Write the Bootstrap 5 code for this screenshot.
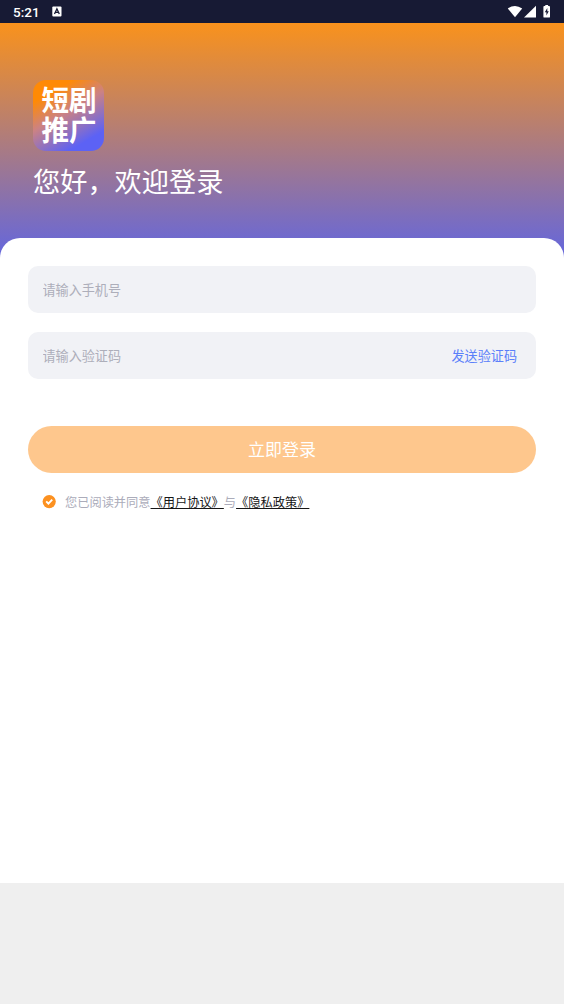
<!DOCTYPE html>
<html lang="zh-CN">
<head>
<meta charset="utf-8">
<meta name="viewport" content="width=device-width, initial-scale=1">
<title>登录</title>
<link href="https://cdn.jsdelivr.net/npm/bootstrap@5.3.0/dist/css/bootstrap.min.css" rel="stylesheet">
<style>
body{font-family:"Noto Sans CJK SC",sans-serif;background:#efefef;height:100vh;overflow:hidden}
.statusbar{height:23px;background:#171a34;color:#fff;font:500 13.5px/23px Roboto,sans-serif;padding:1px 13px 0}
.statusbar svg{margin-top:-1px}
.notice{margin-left:12px}
.screen{height:860px;background:#fff}
.hero{height:240px;background:linear-gradient(#f9921c,#6065e2);padding:57px 33px 0}
.logo{width:71px;height:71px;border-radius:13px;background:linear-gradient(150deg,#ff8a05 20%,#cb8284 46%,#5c62f5 82%);color:#fff;font-size:27.5px;font-weight:700;padding:0 0 0 8.5px}
.logo-line{line-height:29.5px;transform:scaleY(1.05);transform-origin:top}
.logo svg{position:absolute;left:25px;top:16px}
.greeting{font-size:27.2px;line-height:40px;margin-top:9px;font-weight:400}
.sheet{margin-top:-25px;border-radius:20px 20px 0 0;padding:28px 28px 0}
.field{height:47px;border-radius:10px;background:#f1f2f6;padding:0 19px 0 14.5px;margin-bottom:19px}
.field .form-control{font-size:13.1px;line-height:20px}
.field .form-control::placeholder{color:#adaeba;opacity:1}
.send{font-size:13.1px;line-height:20px;color:#5b80fa}
.login{height:47px;margin-top:28px;background:#fec78d;color:#fff;font-size:17px;padding:0 0 2px;--bs-btn-hover-bg:#fec78d}
.terms{font-size:12.22px;line-height:18px;margin:20px 0 0 14px;color:#abacba}
.terms a{color:#161616}
.terms span{margin-left:9px}
</style>
</head>
<body>
<div class="statusbar d-flex align-items-center">
  <span>5:21</span>
  <svg class="notice" width="10" height="11" viewBox="0 0 10 11"><rect x=".3" y=".5" width="9.2" height="10" rx="1" fill="#fff"/><path d="M2.500 8 4.900 2.800 7.300 8M3.400 6.400h3" fill="none" stroke="#171a34" stroke-width="1.300"/></svg>
  <svg class="ms-auto" width="44" height="14" viewBox="0 0 44 14" fill="#fff"><path d="M.8 3.500Q8 -1.700 15.200 3.500L8 12.300Z"/><path d="M29 .8V12.600H17Z"/><path d="M37.300 1h1V0h2.800v1h1q.9 0 .9.900v9.800q0 .9-.9.900h-4.800q-.9 0-.9-.9V1.900q0-.9.900-.9z"/><path d="M40.300 3.100 37.800 7.300h1.600v3.300l2.400-4.300h-1.500z" fill="#171a34"/></svg>
</div>
<main class="screen">
  <header class="hero text-white">
    <div class="logo position-relative pt-1">
      <div class="logo-line">短剧</div>
      <div class="logo-line">推广</div>
      <svg width="6" height="6" viewBox="0 0 6 6"><path d="M1 .5 5.500 3 1 5.500z" fill="#fff"/></svg>
    </div>
    <h1 class="greeting mb-0">您好，欢迎登录</h1>
  </header>
  <form class="sheet bg-white position-relative">
    <div class="field d-flex align-items-center">
      <input class="form-control border-0 bg-transparent p-0 shadow-none" type="tel" placeholder="请输入手机号">
    </div>
    <div class="field d-flex align-items-center">
      <input class="form-control border-0 bg-transparent p-0 shadow-none" type="text" placeholder="请输入验证码">
      <button type="button" class="send btn p-0 border-0 text-nowrap">发送验证码</button>
    </div>
    <button type="button" class="login btn w-100 rounded-pill border-0">立即登录</button>
    <div class="terms d-flex align-items-center">
      <svg width="14" height="14" viewBox="0 0 14 14"><circle cx="7.200" cy="6.600" r="6.600" fill="#fc9120"/><path d="m4.200 6.400 2.200 2.300 3.800-4.100" fill="none" stroke="#fff" stroke-width="1.900"/></svg>
      <span>您已阅读并同意<a href="#">《用户协议》</a>与<a href="#">《隐私政策》</a></span>
    </div>
  </form>
</main>
<script src="https://cdn.jsdelivr.net/npm/bootstrap@5.3.0/dist/js/bootstrap.bundle.min.js"></script>
</body>
</html>
